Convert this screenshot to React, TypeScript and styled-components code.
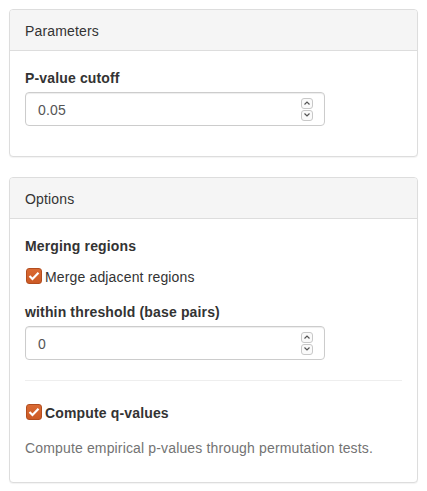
import React from "react";
import styled, { createGlobalStyle } from "styled-components";

const Global = createGlobalStyle`
  html, body { margin: 0; padding: 0; background: #fff; }
  body {
    padding: 9px;
    font-family: "Liberation Sans", Arial, Helvetica, sans-serif;
    font-size: 14px;
    line-height: 20px;
    letter-spacing: 0.15px;
    color: #333;
  }
  * { box-sizing: border-box; }
`;

const Panel = styled.section`
  width: 409px;
  border: 1px solid #ddd;
  border-radius: 4px;
  background: #fff;
  box-shadow: 0 1px 1px rgba(0, 0, 0, 0.05);
  margin-bottom: 20px;
  overflow: hidden;
`;

const PanelHeading = styled.div`
  background: #f5f5f5;
  border-bottom: 1px solid #ddd;
  padding: 11px 15px 9px;
  color: #333;
`;

const PanelBody = styled.div`
  padding: 16px 15px 15px;
  display: flex;
  flex-direction: column;
`;

const Label = styled.div<{ $mt?: number }>`
  font-weight: bold;
  padding-top: 1px;
  margin-top: ${(p) => p.$mt ?? 0}px;
  margin-bottom: 4px;
`;

const InputBox = styled.div<{ $mb?: number }>`
  width: 300px;
  height: 34px;
  border: 1px solid #ccc;
  border-radius: 4px;
  box-shadow: inset 0 1px 1px rgba(0, 0, 0, 0.075);
  padding: 7px 12px 5px;
  color: #555;
  display: flex;
  align-items: center;
  justify-content: space-between;
  margin-bottom: ${(p) => p.$mb ?? 15}px;
`;

const Spinner = styled.div`
  display: flex;
  flex-direction: column;
  gap: 1px;
  margin-right: -1px;
  margin-top: -2px;
`;

const SpinBtn = styled.div`
  width: 12px;
  height: 11px;
  border: 1px solid #c8c8c8;
  border-radius: 3px;
  background: #fafafa;
  display: flex;
  align-items: center;
  justify-content: center;
`;

const CheckRow = styled.div<{ $mt: number; $bold?: boolean }>`
  display: flex;
  align-items: flex-start;
  gap: 3px;
  margin-top: ${(p) => p.$mt}px;
  margin-bottom: 10px;
  font-weight: ${(p) => (p.$bold ? "bold" : "normal")};
  padding-left: 1px;
`;

const CheckText = styled.span`
  line-height: 20px;
`;

const CheckBox = styled.span`
  width: 16px;
  height: 16px;
  margin-top: 1px;
  border-radius: 3px;
  background: linear-gradient(#da6a33, #cc5a25);
  border: 1px solid #b24d1f;
  display: inline-flex;
  align-items: center;
  justify-content: center;
`;

const Rule = styled.hr`
  border: 0;
  border-top: 1px solid #eee;
  margin: 20px 0 22px;
`;

const Help = styled.div`
  color: #737373;
  margin-top: 5px;
  margin-bottom: 9px;
`;

const Chevron = ({ up }: { up?: boolean }) => (
  <svg width="8" height="6" viewBox="0 0 8 6">
    <path
      d={up ? "M1.5 4.5 L4 2 L6.5 4.5" : "M1.5 1.5 L4 4 L6.5 1.5"}
      fill="none"
      stroke="#555"
      strokeWidth="1.2"
    />
  </svg>
);

const NumberInput = ({ value, mb }: { value: string; mb?: number }) => (
  <InputBox $mb={mb}>
    <span>{value}</span>
    <Spinner>
      <SpinBtn>
        <Chevron up />
      </SpinBtn>
      <SpinBtn>
        <Chevron />
      </SpinBtn>
    </Spinner>
  </InputBox>
);

const Check = () => (
  <CheckBox>
    <svg width="12" height="10" viewBox="0 0 12 10">
      <path d="M1.5 5 L4.5 8 L10.5 1.8" fill="none" stroke="#fff" strokeWidth="2.2" />
    </svg>
  </CheckBox>
);

export default function App() {
  return (
    <>
      <Global />
      <Panel>
        <PanelHeading>Parameters</PanelHeading>
        <PanelBody>
          <Label>P-value cutoff</Label>
          <NumberInput value="0.05" />
        </PanelBody>
      </Panel>
      <Panel>
        <PanelHeading>Options</PanelHeading>
        <PanelBody>
          <Label>Merging regions</Label>
          <CheckRow $mt={7}>
            <Check />
            <CheckText>Merge adjacent regions</CheckText>
          </CheckRow>
          <Label $mt={4}>within threshold (base pairs)</Label>
          <NumberInput value="0" mb={0} />
          <Rule />
          <CheckRow $mt={0} $bold>
            <Check />
            <CheckText>Compute q-values</CheckText>
          </CheckRow>
          <Help>Compute empirical p-values through permutation tests.</Help>
        </PanelBody>
      </Panel>
    </>
  );
}
